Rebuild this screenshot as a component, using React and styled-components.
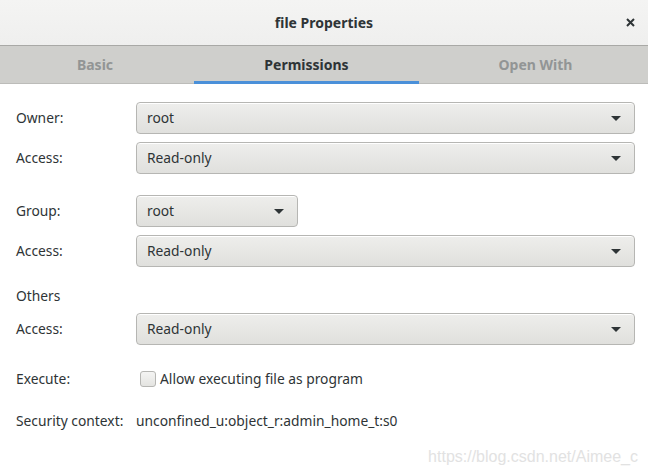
import React from "react";
import styled, { createGlobalStyle } from "styled-components";

const GlobalStyle = createGlobalStyle`
  html, body {
    margin: 0;
    padding: 0;
    background: #ffffff;
  }
  body {
    font-family: "Noto Sans", "DejaVu Sans", sans-serif;
    color: #2e3436;
  }
`;

const Window = styled.div`
  position: relative;
  width: 648px;
  height: 474px;
  background: #ffffff;
  overflow: hidden;
`;

const TitleBar = styled.div`
  height: 45px;
  display: flex;
  align-items: center;
  justify-content: center;
  position: relative;
  background: linear-gradient(#f4f4f3, #efefee);
  border-bottom: 1px solid #a9a9a6;
`;

const Title = styled.div`
  font-size: 14px;
  font-weight: 700;
  color: #2e3436;
`;

const CloseButton = styled.div`
  position: absolute;
  right: 10px;
  top: 14px;
  width: 16px;
  height: 16px;
  display: flex;
  align-items: center;
  justify-content: center;
`;

const Tabs = styled.div`
  display: grid;
  grid-template-columns: 190px 225px 1fr;
  column-gap: 4px;
  height: 37px;
  background: #cfcfcc;
  border-bottom: 1px solid #bcbcb9;
`;

const Tab = styled.div`
  display: flex;
  align-items: center;
  justify-content: center;
  font-size: 14px;
  font-weight: 700;
  color: ${(p) => (p.active ? "#2e3436" : "#929595")};
  box-shadow: ${(p) => (p.active ? "inset 0 -3px 0 #4a90d9" : "none")};
  padding-bottom: 1px;
  margin-bottom: -1px;
`;

const Body = styled.div`
  padding: 18px 13px 0 16px;
`;

const Section = styled.div`
  display: flex;
  flex-direction: column;
  gap: ${(p) => p.gap || 8}px;
  margin-top: ${(p) => p.top || 0}px;
`;

const Row = styled.div`
  display: grid;
  grid-template-columns: 120px 1fr;
  align-items: center;
`;

const Label = styled.div`
  font-size: 13.8px;
  line-height: 18px;
  color: #2e3436;
`;

const Combo = styled.div`
  height: 32px;
  width: ${(p) => p.width || "auto"};
  box-sizing: border-box;
  display: flex;
  align-items: center;
  justify-content: space-between;
  padding: 0 13px 2px 10px;
  border: 1px solid #b6b6b3;
  border-radius: 4px;
  background: linear-gradient(#eeeeec, #e0e0dd);
  box-shadow: inset 0 1px #ffffff, 0 1px rgba(255, 255, 255, 0.8);
  font-size: 13.8px;
  color: #2e3436;
`;

const Arrow = styled.span`
  width: 0;
  height: 0;
  margin-top: 2px;
  border-left: 5px solid transparent;
  border-right: 5px solid transparent;
  border-top: 5px solid #2e3436;
`;

const CheckLine = styled.label`
  display: flex;
  align-items: center;
  gap: 4px;
  padding-left: 4px;
  font-size: 13.8px;
  color: #2e3436;
`;

const Box = styled.span`
  width: 16px;
  height: 16px;
  box-sizing: border-box;
  border: 1px solid #b6b6b3;
  border-radius: 3px;
  background: linear-gradient(#f4f4f3, #e4e4e1);
`;

const Value = styled.div`
  font-size: 13.8px;
  line-height: 18px;
  color: #2e3436;
`;

const Watermark = styled.div`
  position: absolute;
  right: 10px;
  bottom: 8px;
  font-family: "Liberation Sans", Arial, sans-serif;
  font-size: 16px;
  color: #e2e2e2;
`;

const Select = ({ value, width }) => (
  <Combo width={width}>
    <span>{value}</span>
    <Arrow />
  </Combo>
);

export default function App() {
  return (
    <Window>
      <GlobalStyle />
      <TitleBar>
        <Title>file Properties</Title>
        <CloseButton>
          <svg width="9" height="9" viewBox="0 0 9 9">
            <path d="M1 1L8 8M8 1L1 8" stroke="#2e3436" strokeWidth="2" />
          </svg>
        </CloseButton>
      </TitleBar>
      <Tabs>
        <Tab>Basic</Tab>
        <Tab active>Permissions</Tab>
        <Tab>Open With</Tab>
      </Tabs>
      <Body>
        <Section>
          <Row>
            <Label>Owner:</Label>
            <Select value="root" />
          </Row>
          <Row>
            <Label>Access:</Label>
            <Select value="Read-only" />
          </Row>
        </Section>
        <Section top={21}>
          <Row>
            <Label>Group:</Label>
            <Select value="root" width="162px" />
          </Row>
          <Row>
            <Label>Access:</Label>
            <Select value="Read-only" />
          </Row>
        </Section>
        <Section top={20} gap={8}>
          <Label>Others</Label>
          <Row>
            <Label>Access:</Label>
            <Select value="Read-only" />
          </Row>
        </Section>
        <Section top={24}>
          <Row>
            <Label>Execute:</Label>
            <CheckLine>
              <Box />
              Allow executing file as program
            </CheckLine>
          </Row>
        </Section>
        <Section top={24}>
          <Row>
            <Label>Security context:</Label>
            <Value>unconfined_u:object_r:admin_home_t:s0</Value>
          </Row>
        </Section>
      </Body>
      <Watermark>https://blog.csdn.net/Aimee_c</Watermark>
    </Window>
  );
}
